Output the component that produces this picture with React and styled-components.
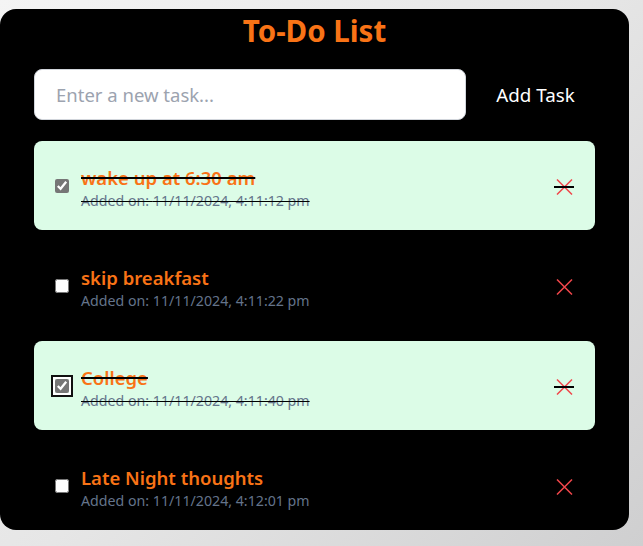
import React, { useState } from "react";
import styled, { createGlobalStyle } from "styled-components";

const Global = createGlobalStyle`
  html, body { margin: 0; padding: 0; }
  body {
    min-height: 546px;
    background: linear-gradient(135deg, #f4f4f4 0%, #e6e6e6 50%, #cfcfd0 100%);
    font-family: "Noto Sans", "Open Sans", sans-serif;
    overflow: hidden;
  }
  #root { padding-top: 9px; }
`;

const Card = styled.div`
  width: 629px;
  height: 521px;
  box-sizing: border-box;
  background: #000;
  border-radius: 16px;
  padding: 4px 34px 0;
  overflow: hidden;
`;

const Title = styled.h1`
  margin: 0;
  text-align: center;
  color: #f97316;
  font-size: 29.5px;
  line-height: 36px;
  font-weight: 700;
`;

const InputRow = styled.div`
  display: flex;
  align-items: center;
  margin-top: 20px;
`;

const TaskInput = styled.input`
  width: 432px;
  height: 51px;
  box-sizing: border-box;
  border: 1px solid #d1d5db;
  border-radius: 8px;
  padding: 0 21px;
  font-family: inherit;
  font-size: 18.5px;
  color: #111;
  outline: none;
  &::placeholder { color: #9ca3af; }
`;

const AddButton = styled.button`
  width: 129px;
  padding: 0 0 0 10px;
  background: transparent;
  border: none;
  color: #fff;
  font-family: inherit;
  font-size: 18.8px;
  text-align: center;
  cursor: pointer;
`;

const List = styled.ul`
  list-style: none;
  margin: 21px 0 0;
  padding: 0;
  display: flex;
  flex-direction: column;
  gap: 11px;
`;

const Item = styled.li`
  display: flex;
  align-items: center;
  height: 89px;
  box-sizing: border-box;
  padding: 0 21px;
  border-radius: 8px;
  background: ${(p) => (p.$done ? "#dcfce7" : "transparent")};
`;

const Check = styled.input`
  width: 14px;
  height: 14px;
  margin: 1px 12px 0 0;
  accent-color: #767676;
  flex: none;
  outline: ${(p) => (p.$focus ? "2px solid #101010" : "none")};
  outline-offset: 2px;
  box-shadow: ${(p) => (p.$focus ? "0 0 0 2px #fff" : "none")};
  border-radius: 2px;
`;

const TextBlock = styled.div`
  flex: 1;
  display: flex;
  flex-direction: column;
  padding-top: 6px;
`;

const TaskName = styled.span`
  color: #f97316;
  font-size: 18.5px;
  font-weight: 600;
  line-height: 24px;
  text-decoration: ${(p) => (p.$done ? "line-through #000 2px" : "none")};
`;

const DateText = styled.span`
  color: #64748b;
  font-size: 14.2px;
  line-height: 22px;
  text-decoration: ${(p) => (p.$done ? "line-through #000 1px" : "none")};
`;

const Delete = styled.button`
  position: relative;
  display: flex;
  align-items: center;
  justify-content: center;
  width: 20px;
  height: 20px;
  background: transparent;
  border: none;
  padding: 0;
  cursor: pointer;
  margin-top: 2px;
  &::after {
    content: "";
    display: ${(p) => (p.$done ? "block" : "none")};
    position: absolute;
    left: 0;
    right: 0;
    top: 9px;
    height: 2px;
    background: #000;
  }
`;

const CrossIcon = () => (
  <svg width="17" height="16" viewBox="0 0 17 16">
    <path d="M1 0.5 L16 15.5 M16 0.5 L1 15.5" stroke="#f0464b" strokeWidth="1.5" fill="none" />
  </svg>
);

const initial = [
  { id: 1, text: "wake up at 6:30 am", date: "11/11/2024, 4:11:12 pm", done: true },
  { id: 2, text: "skip breakfast", date: "11/11/2024, 4:11:22 pm", done: false },
  { id: 3, text: "College", date: "11/11/2024, 4:11:40 pm", done: true, focus: true },
  { id: 4, text: "Late Night thoughts", date: "11/11/2024, 4:12:01 pm", done: false },
];

export default function App() {
  const [tasks, setTasks] = useState(initial);
  const toggle = (id) =>
    setTasks((t) => t.map((x) => (x.id === id ? { ...x, done: !x.done } : x)));
  return (
    <>
      <Global />
      <Card>
        <Title>To-Do List</Title>
        <InputRow>
          <TaskInput placeholder="Enter a new task..." />
          <AddButton>Add Task</AddButton>
        </InputRow>
        <List>
          {tasks.map((t) => (
            <Item key={t.id} $done={t.done}>
              <Check
                type="checkbox"
                checked={t.done}
                onChange={() => toggle(t.id)}
                $focus={t.focus}
              />
              <TextBlock>
                <TaskName $done={t.done}>{t.text}</TaskName>
                <DateText $done={t.done}>Added on: {t.date}</DateText>
              </TextBlock>
              <Delete $done={t.done} aria-label="Delete">
                <CrossIcon />
              </Delete>
            </Item>
          ))}
        </List>
      </Card>
    </>
  );
}
